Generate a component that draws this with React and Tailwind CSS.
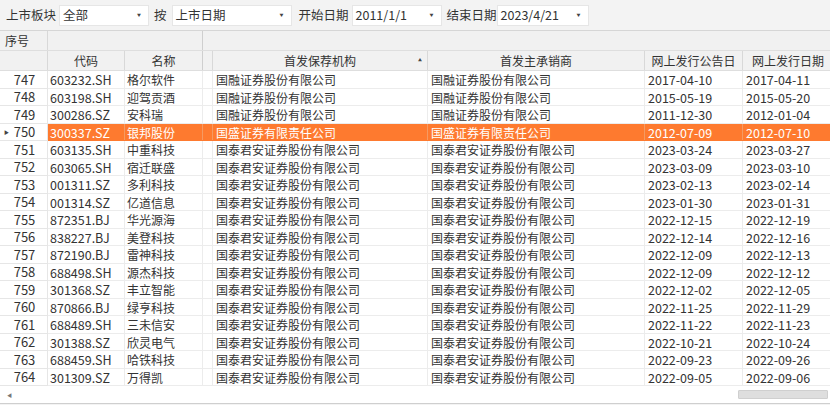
import React from "react";

const FONT = { fontFamily: '"Noto Sans CJK SC", "Noto Sans", sans-serif' };

const GTJA = "国泰君安证券股份有限公司";
const GR = "国融证券股份有限公司";
const GS = "国盛证券有限责任公司";

const rows = [
  [747, "603232.SH", "格尔软件", GR, GR, "2017-04-10", "2017-04-11"],
  [748, "603198.SH", "迎驾贡酒", GR, GR, "2015-05-19", "2015-05-20"],
  [749, "300286.SZ", "安科瑞", GR, GR, "2011-12-30", "2012-01-04"],
  [750, "300337.SZ", "银邦股份", GS, GS, "2012-07-09", "2012-07-10"],
  [751, "603135.SH", "中重科技", GTJA, GTJA, "2023-03-24", "2023-03-27"],
  [752, "603065.SH", "宿迁联盛", GTJA, GTJA, "2023-03-09", "2023-03-10"],
  [753, "001311.SZ", "多利科技", GTJA, GTJA, "2023-02-13", "2023-02-14"],
  [754, "001314.SZ", "亿道信息", GTJA, GTJA, "2023-01-30", "2023-01-31"],
  [755, "872351.BJ", "华光源海", GTJA, GTJA, "2022-12-15", "2022-12-19"],
  [756, "838227.BJ", "美登科技", GTJA, GTJA, "2022-12-14", "2022-12-16"],
  [757, "872190.BJ", "雷神科技", GTJA, GTJA, "2022-12-09", "2022-12-13"],
  [758, "688498.SH", "源杰科技", GTJA, GTJA, "2022-12-09", "2022-12-12"],
  [759, "301368.SZ", "丰立智能", GTJA, GTJA, "2022-12-02", "2022-12-05"],
  [760, "870866.BJ", "绿亨科技", GTJA, GTJA, "2022-11-25", "2022-11-29"],
  [761, "688489.SH", "三未信安", GTJA, GTJA, "2022-11-22", "2022-11-23"],
  [762, "301388.SZ", "欣灵电气", GTJA, GTJA, "2022-10-21", "2022-10-24"],
  [763, "688459.SH", "哈铁科技", GTJA, GTJA, "2022-09-23", "2022-09-26"],
  [764, "301309.SZ", "万得凯", GTJA, GTJA, "2022-09-05", "2022-09-06"],
];

const Select = ({ value, w }) => (
  <div className={`${w} h-[21px] bg-white border border-[#e6e6e6] flex items-center justify-between pl-[3px] pr-[7px]`}>
    <span className="text-[12.5px] text-[#333]">{value}</span>
    <span className="text-[4px] text-[#444]">▼</span>
  </div>
);

const App = () => {
  return (
    <div style={FONT} className="w-[830px] h-[405px] bg-[#f3f3f3] text-[#333] overflow-hidden">
      {/* toolbar */}
      <div className="h-[30px] flex items-center pl-[6px] text-[12.5px]">
        <span className="mr-[3px]">上市板块</span>
        <Select value="全部" w="w-[90px]" />
        <span className="ml-[5px] mr-[5px]">按</span>
        <Select value="上市日期" w="w-[120px]" />
        <span className="ml-[7px] mr-[3px]">开始日期</span>
        <Select value="2011/1/1" w="w-[90px]" />
        <span className="ml-[5px] mr-[0px]">结束日期</span>
        <Select value="2023/4/21" w="w-[92px]" />
      </div>

      {/* grid */}
      <div className="border-t border-[#d6d6d6] bg-white text-[12px]">
        {/* header row 1 */}
        <div className="flex h-[20px] bg-[#f1f1f1] border-b border-[#dedede]">
          <div className="w-[48px] shrink-0 border-r border-[#d8d8d8] pl-[5px] flex items-center">序号</div>
          <div className="w-[155px] shrink-0 border-r border-[#cfcfcf]" />
          <div className="flex-1" />
        </div>
        {/* header row 2 */}
        <div className="flex h-[20px] bg-[#f1f1f1] border-b border-[#dedede]">
          <div className="w-[48px] shrink-0 border-r border-[#d8d8d8]" />
          <div className="w-[77px] shrink-0 border-r border-[#d8d8d8] flex items-center justify-center">代码</div>
          <div className="w-[78px] shrink-0 border-r border-[#cfcfcf] flex items-center justify-center">名称</div>
          <div className="w-[10px] shrink-0 border-r border-[#d8d8d8]" />
          <div className="w-[215px] shrink-0 border-r border-[#d8d8d8] flex items-center justify-center relative">
            首发保荐机构
            <span className="absolute right-[5px] top-[6px] text-[4px] text-[#444]">▲</span>
          </div>
          <div className="w-[217px] shrink-0 border-r border-[#d8d8d8] flex items-center justify-center">首发主承销商</div>
          <div className="w-[98px] shrink-0 border-r border-[#d8d8d8] flex items-center justify-center">网上发行公告日</div>
          <div className="w-[90px] shrink-0 flex items-center justify-center">网上发行日期</div>
        </div>

        {/* data rows */}
        {rows.map((r) => {
          const sel = r[0] === 750;
          const cell = sel
            ? "border-r border-[#f59a62] text-white"
            : "border-r border-[#ececec]";
          return (
            <div key={r[0]} className="flex h-[17.5px] leading-[17px]">
              <div className="w-[48px] shrink-0 border-r border-b border-[#e6e6e6] bg-white relative text-[13px] flex items-center justify-center">
                {sel && <span className="absolute left-[4px] text-[5px] text-[#444]">▶</span>}
                <span className="pl-[2px]">{r[0]}</span>
              </div>
              <div
                className={`flex flex-1 border-b ${sel ? "bg-[#fe7a2f] border-[#fe7a2f]" : "border-[#ececec]"}`}
              >
                <div className={`w-[77px] shrink-0 pl-[2px] text-[12.5px] ${cell}`}>{r[1]}</div>
                <div className={`w-[78px] shrink-0 pl-[2px] ${cell}`}>{r[2]}</div>
                <div className={`w-[10px] shrink-0 ${cell}`} />
                <div className={`w-[215px] shrink-0 pl-[3px] ${cell}`}>{r[3]}</div>
                <div className={`w-[217px] shrink-0 pl-[3px] ${cell}`}>{r[4]}</div>
                <div className={`w-[98px] shrink-0 pl-[3px] text-[12.5px] ${cell}`}>{r[5]}</div>
                <div className={`w-[90px] shrink-0 pl-[3px] text-[12.5px] ${sel ? "text-white" : ""}`}>{r[6]}</div>
              </div>
            </div>
          );
        })}

        {/* horizontal scrollbar */}
        <div className="h-[18px] flex items-center justify-between border-b border-[#cfcfcf]">
          <span className="pl-[7px] text-[5px] text-[#777]">◀</span>
          <div className="w-[90px] h-[9px] mr-[2px] bg-[#dedede] border border-[#cfcfcf] rounded-[1px]" />
        </div>
      </div>
    </div>
  );
};

export default App;
